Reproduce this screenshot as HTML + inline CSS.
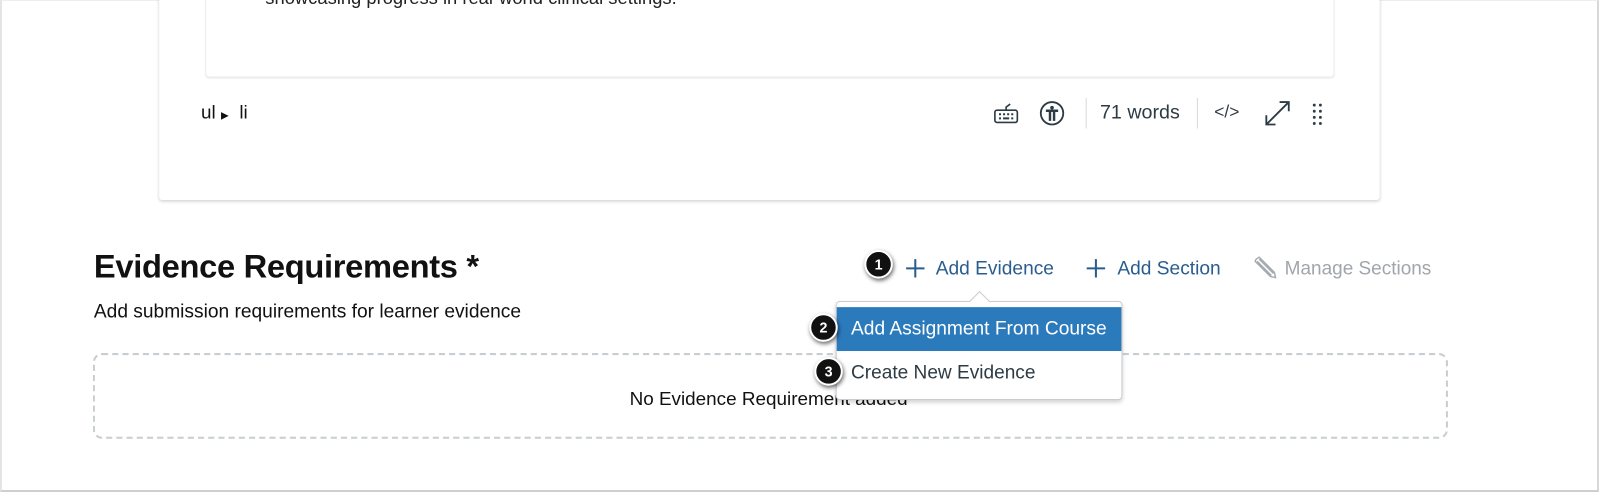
<!DOCTYPE html>
<html><head><meta charset="utf-8"><style>
*{margin:0;padding:0;box-sizing:border-box}
body{width:1600px;height:494px;background:#fff;font-family:"Liberation Sans",sans-serif;position:relative;overflow:hidden;color:#000}
.frame{position:absolute;left:0;top:0;width:1599px;height:492px;border-left:2px solid #e4e4e4;border-right:2px solid #d8d8d8;border-bottom:2px solid #cfcfcf;border-top:1px solid #eee}
.wrap{position:absolute;left:0;top:0;width:1600px;height:494px;transform:scale(1.0204);transform-origin:0 0}
.card{position:absolute;left:156px;top:-10px;width:1196px;height:206px;background:#fff;box-shadow:0 1px 3px rgba(0,0,0,.18);border-radius:3px}
.editor{position:absolute;left:201px;top:-10px;width:1107px;height:86px;border:1px solid #e6e9eb;border-top:none;border-radius:0 0 4px 4px;box-shadow:0 1px 1px rgba(0,0,0,.05)}
.a{position:absolute;white-space:nowrap}
.badge{position:absolute;width:28px;height:28px;border-radius:50%;background:#111;border:2px solid #fff;box-shadow:1px 2px 4px rgba(0,0,0,.6);color:#fff;font-size:14px;font-weight:bold;text-align:center;line-height:24px}
.blue{color:#2a5d8f}
</style></head><body>
<div class="frame"></div>
<div class="wrap">
<div class="card"></div>
<div class="editor"></div>
<div class="a" style="left:260px;top:-12px;font-size:18px;color:#222">showcasing progress in real-world clinical settings.</div>
<div class="a" style="left:197px;top:99px;font-size:18.5px;color:#111">ul&nbsp;<span style="font-size:10px">▶</span>&nbsp;&nbsp;li</div>
<svg class="a" style="left:973px;top:98px" width="26" height="26" viewBox="0 0 26 26" fill="none" stroke="#2d3b45" stroke-width="1.6"><rect x="2" y="10" width="22" height="12" rx="2"/><path d="M13 10V7l4-3"/><g stroke-width="2"><path d="M6 14h2M10 14h2M14 14h2M18 14h2M6 18h2M10 18h6M18 18h2"/></g></svg>
<svg class="a" style="left:1018px;top:98px" width="26" height="26" viewBox="0 0 26 26"><circle cx="13" cy="13" r="11" fill="none" stroke="#2d3b45" stroke-width="1.8"/><circle cx="13" cy="7.5" r="1.8" fill="#2d3b45"/><path d="M7 10.5h12M11 10.5v10M15 10.5v10" stroke="#2d3b45" stroke-width="2.4" fill="none"/></svg>
<div class="a" style="left:1064px;top:96px;width:1px;height:30px;background:#d7dadd"></div>
<div class="a" style="left:1078px;top:100px;font-size:19.3px;color:#2d3b45">71 words</div>
<div class="a" style="left:1173px;top:96px;width:1px;height:30px;background:#d7dadd"></div>
<div class="a" style="left:1190px;top:100px;font-size:17px;color:#2d3b45">&lt;/&gt;</div>
<svg class="a" style="left:1238px;top:97px" width="28" height="28" viewBox="0 0 28 28" fill="none" stroke="#2d3b45" stroke-width="1.8"><path d="M3 25L25 3M16 3h9v9M3 16v9h9"/></svg>
<svg class="a" style="left:1286px;top:101px" width="10" height="22" viewBox="0 0 10 22" fill="#2d3b45"><circle cx="2" cy="2" r="1.4"/><circle cx="8" cy="2" r="1.4"/><circle cx="2" cy="8" r="1.4"/><circle cx="8" cy="8" r="1.4"/><circle cx="2" cy="14" r="1.4"/><circle cx="8" cy="14" r="1.4"/><circle cx="2" cy="20" r="1.4"/><circle cx="8" cy="20" r="1.4"/></svg>

<div class="a" style="left:92px;top:243px;font-size:32px;font-weight:bold;color:#111;letter-spacing:-.3px">Evidence Requirements *</div>
<div class="a" style="left:92px;top:294px;font-size:18.8px;color:#111">Add submission requirements for learner evidence</div>
<div class="a" style="left:91px;top:346px;width:1328px;height:84px;border:2px dashed #c7cdd1;border-radius:9px"></div>
<div class="a" style="left:617px;top:380px;font-size:18.5px;color:#111">No Evidence Requirement added</div>

<svg class="a" style="left:887px;top:253px" width="20" height="20" viewBox="0 0 20 20" stroke="#2a5d8f" stroke-width="2"><path d="M10 1v18M1 10h18"/></svg>
<div class="a blue" style="left:917px;top:252px;font-size:18.8px">Add Evidence</div>
<svg class="a" style="left:1064px;top:253px" width="20" height="20" viewBox="0 0 20 20" stroke="#2a5d8f" stroke-width="2"><path d="M10 1v18M1 10h18"/></svg>
<div class="a blue" style="left:1095px;top:252px;font-size:18.8px">Add Section</div>
<svg class="a" style="left:1227px;top:250px" width="24" height="24" viewBox="0 0 24 24" fill="none" stroke="#a5abb0" stroke-width="1.4"><path d="M4 4l3-2 15 15 1 5-5-1L3 6z M5 6l14 14M7 4l14 14"/></svg>
<div class="a" style="left:1259px;top:252px;font-size:18.6px;color:#a0a6ab">Manage Sections</div>
<div class="badge" style="left:847px;top:245px">1</div>

<div class="a" style="left:819px;top:295px;width:281px;height:97px;background:#fff;border:1px solid #c7cdd1;border-radius:4px;box-shadow:0 2px 4px rgba(0,0,0,.18)"></div>
<div class="a" style="left:953px;top:288px;width:14px;height:14px;background:#fff;border-left:1px solid #c7cdd1;border-top:1px solid #c7cdd1;transform:rotate(45deg)"></div>
<div class="a" style="left:820px;top:301px;width:279px;height:43px;background:#2b7abc"></div>
<div class="a" style="left:834px;top:311px;font-size:18.8px;color:#fff">Add Assignment From Course</div>
<div class="a" style="left:834px;top:354px;font-size:18.7px;color:#2d3b45">Create New Evidence</div>
<div class="badge" style="left:793px;top:307px">2</div>
<div class="badge" style="left:798px;top:350px">3</div>
</div>
</body></html>
